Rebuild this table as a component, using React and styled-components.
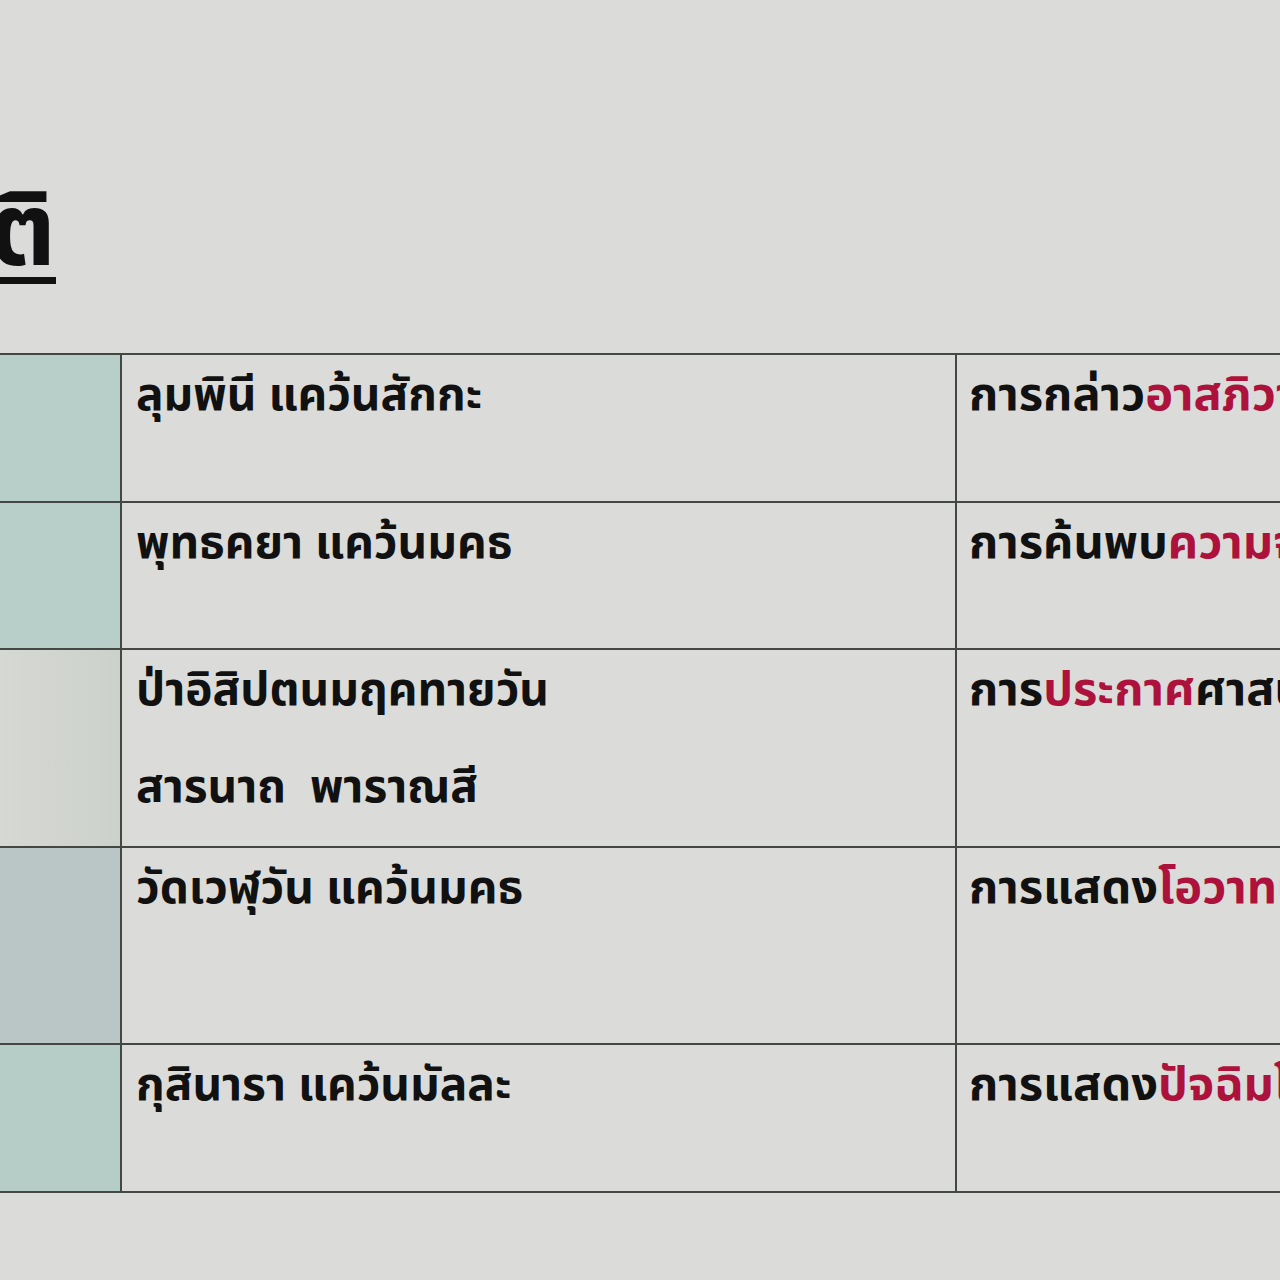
import React from "react";
import styled, { createGlobalStyle } from "styled-components";

const Global = createGlobalStyle`
  html, body { margin: 0; padding: 0; background: #dbdcda; }
  body { width: 1280px; height: 1280px; overflow: hidden; }
`;

const FONT = `"Noto Sans Thai", "Noto Sans", "Noto Sans CJK SC", sans-serif`;
const LINE = "#434845";

const Page = styled.div`
  width: 1280px;
  height: 1280px;
  overflow: hidden;
  background: #dbdcda;
  font-family: ${FONT};
  color: #111;
  display: flex;
  flex-direction: column;
`;

const TitleWrap = styled.div`
  width: 56px;
  height: 353px;
  display: flex;
  justify-content: flex-end;
  align-items: flex-end;
  padding-bottom: 58px;
  box-sizing: border-box;
`;

const Title = styled.h1`
  margin: 0;
  font-size: 102px;
  font-weight: 700;
  white-space: nowrap;
  line-height: 1.2;
  text-decoration: underline;
  text-decoration-thickness: 7px;
  text-underline-offset: 12px;
`;

const Table = styled.div`
  display: grid;
  grid-template-columns: 122px 835px 600px;
  grid-template-rows: ${(p) => p.$rows};
  width: 1557px;
  border-top: 2px solid ${LINE};
`;

const Cell = styled.div`
  box-sizing: border-box;
  border-right: 2px solid ${LINE};
  border-bottom: 2px solid ${LINE};
  background: ${(p) => p.$bg || "transparent"};
  padding: 0 0 0 ${(p) => p.$pad || 14}px;
  font-size: ${(p) => p.$size || 46}px;
  font-weight: 700;
  white-space: nowrap;
  overflow: hidden;
`;

const Line = styled.div`
  height: 97px;
  line-height: 82px;
  white-space: pre;
`;

const Red = styled.span`
  color: #ad123c;
`;

const rows = [
  {
    bg: "#b7cfc8",
    place: ["ลุมพินี แคว้นสักกะ"],
    pre: "การกล่าว",
    red: "อาสภิวาจา",
    post: "",
  },
  {
    bg: "#b7cfc8",
    place: ["พุทธคยา แคว้นมคธ"],
    pre: "การค้นพบ",
    red: "ความจริง",
    post: "",
  },
  {
    bg: "linear-gradient(90deg, #d6d8d4 0%, #d1d4cf 50%, #cdd1cb 100%)",
    place: ["ป่าอิสิปตนมฤคทายวัน", "สารนาถ  พาราณสี"],
    pre: "การ",
    red: "ประกาศ",
    post: "ศาสนา",
  },
  {
    bg: "#b9c6c5",
    place: ["วัดเวฬุวัน แคว้นมคธ"],
    pre: "การแสดง",
    red: "โอวาทปาติโมกข์",
    post: "",
  },
  {
    bg: "#b5cdc6",
    place: ["กุสินารา แคว้นมัลละ"],
    pre: "การแสดง",
    red: "ปัจฉิมโอวาท",
    post: "",
  },
];

export default function App() {
  return (
    <Page>
      <Global />
      <TitleWrap>
        <Title>สังเวชนียสถาน ๔ ในพุทธประวัติ</Title>
      </TitleWrap>
      <Table $rows="148px 147px 198px 197px 148px">
        {rows.map((r, i) => (
          <React.Fragment key={i}>
            <Cell $bg={r.bg} />
            <Cell $size={46}>
              {r.place.map((l, j) => (
                <Line key={j}>{l}</Line>
              ))}
            </Cell>
            <Cell $size={47} $pad={12}>
              <Line>
                {r.pre}
                <Red>{r.red}</Red>
                {r.post}
              </Line>
            </Cell>
          </React.Fragment>
        ))}
      </Table>
    </Page>
  );
}
